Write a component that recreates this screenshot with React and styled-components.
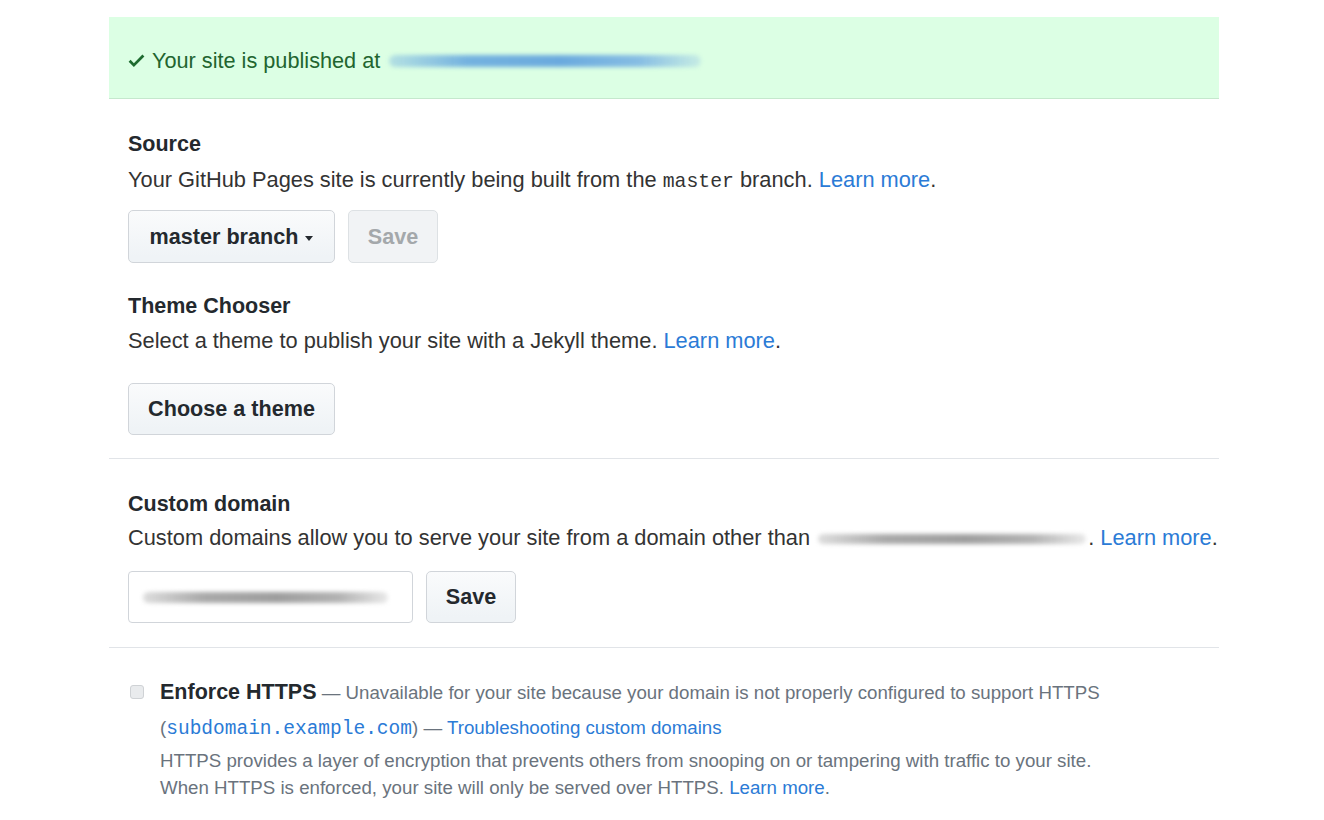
import React from 'react';
import styled, { createGlobalStyle } from 'styled-components';

const GlobalStyle = createGlobalStyle`
  body {
    margin: 0;
    background: #fff;
    font-family: 'Liberation Sans', Arial, sans-serif;
    color: #24292e;
  }
`;

const CheckIcon = () => (
  <svg width="17" height="21" viewBox="0 0 12 16" aria-hidden="true">
    <path fill="#1e6b2f" d="M12 5l-8 8-4-4 1.5-1.5L4 10l6.5-6.5L12 5z" />
  </svg>
);

const App = () => {
  return (
    <>
      <GlobalStyle />
      <Page>
        <Settings>
          <Flash>
            <CheckIcon />
            <span>Your site is published at</span>
            <Redacted $w={312} $h={12} $tone="blue" />
          </Flash>

          <Section>
            <Heading $top={31}>Source</Heading>
            <Note $top={8}>
              Your GitHub Pages site is currently being built from the <Code>master</Code> branch.{' '}
              <Link>Learn more</Link>.
            </Note>
            <ButtonRow $top={14}>
              <Button $w={207}>
                master branch <Caret />
              </Button>
              <Button $w={90} disabled>Save</Button>
            </ButtonRow>

            <Heading $top={29}>Theme Chooser</Heading>
            <Note>
              Select a theme to publish your site with a Jekyll theme. <Link>Learn more</Link>.
            </Note>
            <ButtonRow $top={28}>
              <Button $w={207} $h={52}>Choose a theme</Button>
            </ButtonRow>
          </Section>

          <Divider $top={23} />

          <Section>
            <Heading $top={31}>Custom domain</Heading>
            <Note $top={6}>
              Custom domains allow you to serve your site from a domain other than{' '}
              <Redacted $w={268} $h={10} $tone="gray" />. <Link>Learn more</Link>.
            </Note>
            <ButtonRow $top={19}>
              <DomainInput>
                <Redacted $w={245} $h={11} $tone="gray" />
              </DomainInput>
              <Button $w={90} $h={52}>Save</Button>
            </ButtonRow>
          </Section>

          <Divider $top={24} />

          <HttpsBlock>
            <Checkbox />
            <HttpsText>
              <HttpsLine>
                <strong>Enforce HTTPS</strong> — Unavailable for your site because your domain is not properly configured to support HTTPS
              </HttpsLine>
              <HttpsLine $top={7}>
                (<MonoLink>subdomain.example.com</MonoLink>) — <Link>Troubleshooting custom domains</Link>
              </HttpsLine>
              <HelpText>
                HTTPS provides a layer of encryption that prevents others from snooping on or tampering with traffic to your site.
                <br />
                When HTTPS is enforced, your site will only be served over HTTPS. <Link>Learn more</Link>.
              </HelpText>
            </HttpsText>
          </HttpsBlock>
        </Settings>
      </Page>
    </>
  );
};

export default App;

const Page = styled.div`
  padding-top: 17px;
`;

const Settings = styled.div`
  width: 1110px;
  margin-left: 109px;
`;

const Flash = styled.div`
  display: flex;
  align-items: center;
  gap: 7px;
  box-sizing: border-box;
  height: 82px;
  padding: 6px 19px 0;
  background: #dcffe4;
  border-bottom: 1px solid #c5e8cd;
  color: #22652f;
  font-size: 21.7px;
`;

const Redacted = styled.span`
  display: inline-block;
  vertical-align: middle;
  width: ${(p) => p.$w}px;
  height: ${(p) => p.$h}px;
  margin: 0 2px;
  border-radius: 6px;
  background: ${(p) =>
    p.$tone === 'blue'
      ? 'linear-gradient(90deg, rgba(120,180,225,0.4), #74b2df 25%, #6aaade 55%, #86bde3 80%, rgba(150,195,230,0.3))'
      : 'linear-gradient(90deg, rgba(170,170,170,0.4), #a9a9a9 25%, #9e9e9e 55%, #b3b3b3 80%, rgba(200,200,200,0.4))'};
  filter: blur(2px);
`;

const Section = styled.div`
  padding: 0 19px;
`;

const Heading = styled.h3`
  margin: ${(p) => p.$top ?? 30}px 0 0;
  font-size: 21.5px;
  line-height: 28px;
  font-weight: 700;
  color: #24292e;
`;

const Note = styled.p`
  margin: ${(p) => p.$top ?? 7}px 0 0;
  font-size: 21.8px;
  line-height: 28px;
  color: #333;
  white-space: nowrap;
`;

const Code = styled.code`
  font-family: 'Liberation Mono', 'DejaVu Sans Mono', monospace;
  font-size: 19.8px;
  color: #333;
`;

const Link = styled.a`
  color: #2b7bd6;
  text-decoration: none;
  cursor: pointer;
`;

const ButtonRow = styled.div`
  display: flex;
  align-items: center;
  gap: 13px;
  margin-top: ${(p) => p.$top}px;
`;

const Button = styled.button`
  display: inline-flex;
  align-items: center;
  justify-content: center;
  gap: 7px;
  box-sizing: border-box;
  width: ${(p) => p.$w}px;
  height: ${(p) => p.$h ?? 53}px;
  padding: 0;
  font-family: 'Liberation Sans', Arial, sans-serif;
  font-size: 21.6px;
  font-weight: 700;
  color: #24292e;
  background: linear-gradient(#fafbfc, #eff3f6 90%);
  border: 1px solid #d1d5da;
  border-radius: 5px;

  &:disabled {
    color: #a4a8ab;
    background: #f1f3f5;
    border-color: #dde1e4;
  }
`;

const Caret = styled.span`
  display: inline-block;
  width: 0;
  height: 0;
  margin-top: 3px;
  border-top: 5px solid #24292e;
  border-left: 4px solid transparent;
  border-right: 4px solid transparent;
`;

const DomainInput = styled.div`
  display: flex;
  align-items: center;
  box-sizing: border-box;
  width: 285px;
  height: 52px;
  padding: 0 12px;
  border: 1px solid #d1d5da;
  border-radius: 4px;
  background: #fff;
`;

const Divider = styled.hr`
  margin: ${(p) => p.$top}px 0 0;
  border: 0;
  border-top: 1px solid #e1e4e8;
`;

const HttpsBlock = styled.div`
  display: flex;
  align-items: flex-start;
  gap: 16px;
  padding: 30px 21px 0;
`;

const Checkbox = styled.span`
  flex: none;
  box-sizing: border-box;
  width: 14px;
  height: 14px;
  margin-top: 7px;
  border: 1px solid #cfd2d5;
  border-radius: 3px;
  background: #e9ebed;
`;

const HttpsText = styled.div`
  display: flex;
  flex-direction: column;
  color: #6a737d;
  font-size: 18.7px;
`;

const HttpsLine = styled.div`
  margin-top: ${(p) => p.$top ?? 0}px;
  line-height: 28px;
  white-space: nowrap;

  strong {
    font-size: 21.5px;
    color: #24292e;
  }
`;

const MonoLink = styled.code`
  font-family: 'Liberation Mono', 'DejaVu Sans Mono', monospace;
  font-size: 19.5px;
  color: #2b7bd6;
`;

const HelpText = styled.p`
  margin: 4px 0 0;
  line-height: 27px;
  font-size: 18.7px;
  color: #6a737d;
`;
